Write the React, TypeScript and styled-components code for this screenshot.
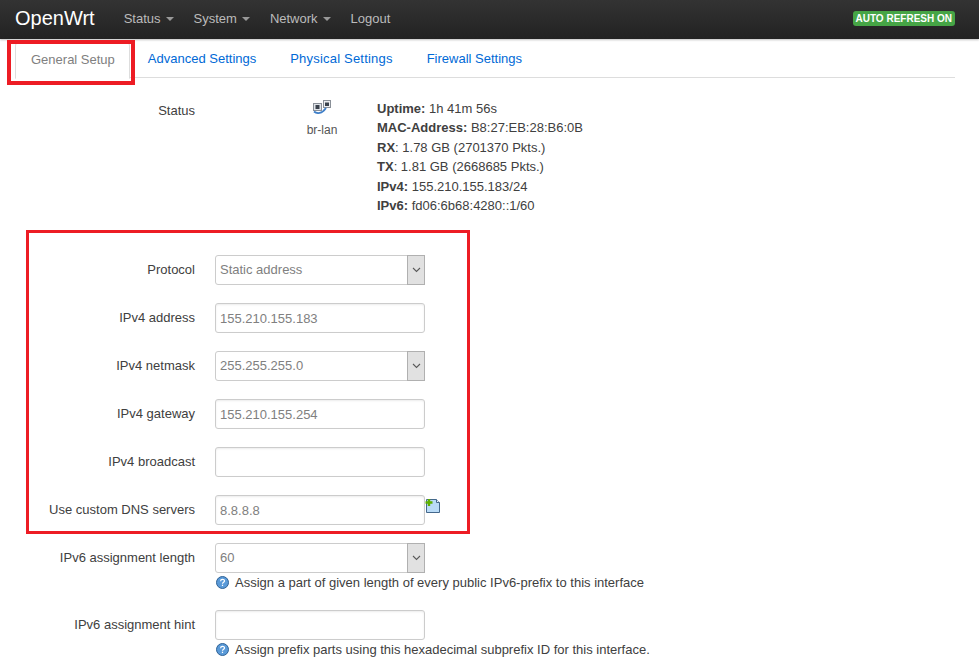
import React from 'react'
import styled, { createGlobalStyle } from 'styled-components'

const GlobalStyle = createGlobalStyle`
  html, body {
    margin: 0;
    padding: 0;
    height: 658px;
    overflow: hidden;
    background: #fff;
    font-family: "Liberation Sans", Arial, sans-serif;
    font-size: 13px;
    color: #555;
  }
`

const BridgeIcon = () => (
  <svg width="18" height="14" viewBox="0 0 18 14">
    <rect x="0.5" y="3.5" width="8" height="7" fill="#dfe3e8" stroke="#8a9098" />
    <rect x="10.5" y="0.5" width="7" height="7" fill="#eceef1" stroke="#8a9098" />
    <rect x="2.5" y="5" width="4" height="4" fill="#3a424c" />
    <rect x="12" y="2.5" width="4" height="3.5" fill="#3a424c" />
    <path d="M1 11.5c3 2.6 8 2.4 12-3.5" fill="none" stroke="#3f7fc8" strokeWidth="1.8" />
  </svg>
)

const AddIcon = () => (
  <svg width="16" height="15" viewBox="0 0 16 15">
    <path d="M1.5 1.5h10l3 3v10h-13z" fill="#b9dbf7" stroke="#44688c" />
    <path d="M11.5 1.5v3h3" fill="#eaf4fc" stroke="#44688c" />
    <path d="M4 1v7M0.5 4.5h7" stroke="#5fb000" strokeWidth="2.4" />
  </svg>
)

const HelpIcon = () => (
  <svg width="13" height="13" viewBox="0 0 13 13">
    <circle cx="6.5" cy="6.5" r="6" fill="#5a9ad8" stroke="#2f6296" />
    <path d="M4.6 5.2c0-2.3 3.9-2.3 3.9-.2 0 1.3-2 1.3-2 2.8" fill="none" stroke="#fff" strokeWidth="1.2" />
    <rect x="5.9" y="8.7" width="1.2" height="1.3" fill="#fff" />
  </svg>
)

const Chevron = () => (
  <svg width="9" height="6" viewBox="0 0 9 6">
    <path d="M1 1l3.5 3.5L8 1" fill="none" stroke="#5a5a5a" strokeWidth="1.1" />
  </svg>
)

const Field = ({ value }: { value?: string }) => <TextInput readOnly value={value ?? ''} />

const Dropdown = ({ value }: { value: string }) => (
  <SelectBox>
    <SelectValue>{value}</SelectValue>
    <SelectButton>
      <Chevron />
    </SelectButton>
  </SelectBox>
)

const App = () => (
  <Page>
    <GlobalStyle />
    <Navbar>
      <Brand>OpenWrt</Brand>
      <NavItem>Status<Caret /></NavItem>
      <NavItem>System<Caret /></NavItem>
      <NavItem>Network<Caret /></NavItem>
      <NavItem>Logout</NavItem>
      <Badge>AUTO REFRESH ON</Badge>
    </Navbar>

    <Tabs>
      <ActiveTab>General Setup</ActiveTab>
      <Tab>Advanced Settings</Tab>
      <Tab $tracking={0.2}>Physical Settings</Tab>
      <Tab>Firewall Settings</Tab>
    </Tabs>

    <Form>
      <StatusRow>
        <StatusLabel>Status</StatusLabel>
        <Device>
          <BridgeIcon />
          <DeviceName>br-lan</DeviceName>
        </Device>
        <Details>
          <div><b>Uptime:</b> 1h 41m 56s</div>
          <div><b>MAC-Address:</b> B8:27:EB:28:B6:0B</div>
          <div><b>RX</b>: 1.78 GB (2701370 Pkts.)</div>
          <div><b>TX</b>: 1.81 GB (2668685 Pkts.)</div>
          <div><b>IPv4:</b> 155.210.155.183/24</div>
          <div><b>IPv6:</b> fd06:6b68:4280::1/60</div>
        </Details>
      </StatusRow>

      <Row>
        <Label>Protocol</Label>
        <Dropdown value="Static address" />
      </Row>
      <Row>
        <Label>IPv4 address</Label>
        <Field value="155.210.155.183" />
      </Row>
      <Row>
        <Label>IPv4 netmask</Label>
        <Dropdown value="255.255.255.0" />
      </Row>
      <Row>
        <Label>IPv4 gateway</Label>
        <Field value="155.210.155.254" />
      </Row>
      <Row>
        <Label>IPv4 broadcast</Label>
        <Field />
      </Row>
      <Row>
        <Label>Use custom DNS servers</Label>
        <Field value="8.8.8.8" />
        <AddButton><AddIcon /></AddButton>
      </Row>
      <Row>
        <Label>IPv6 assignment length</Label>
        <Control>
          <Dropdown value="60" />
          <Help><HelpIcon />Assign a part of given length of every public IPv6-prefix to this interface</Help>
        </Control>
      </Row>
      <Row>
        <Label>IPv6 assignment hint</Label>
        <Control>
          <Field />
          <Help><HelpIcon />Assign prefix parts using this hexadecimal subprefix ID for this interface.</Help>
        </Control>
      </Row>
    </Form>

    <TabHighlight />
    <FormHighlight />
  </Page>
)

const Page = styled.div`
  position: relative;
  width: 979px;
  height: 658px;
  overflow: hidden;
`

const Navbar = styled.header`
  display: flex;
  align-items: center;
  box-sizing: border-box;
  height: 39px;
  padding: 0 24px 2px 15px;
  background: linear-gradient(#333333, #222222);
  box-shadow: 0 1px 2px rgba(0, 0, 0, 0.25);
`

const Brand = styled.div`
  margin-right: 29px;
  font-size: 20px;
  color: #fff;
`

const NavItem = styled.div`
  display: flex;
  align-items: center;
  margin-right: 20px;
  font-size: 13px;
  color: #bbbbbb;
`

const Caret = styled.span`
  width: 0;
  height: 0;
  margin-left: 5px;
  border-top: 4px solid #999;
  border-left: 4px solid transparent;
  border-right: 4px solid transparent;
`

const Badge = styled.div`
  margin-left: auto;
  padding: 2px 3px;
  border-radius: 3px;
  background: #46a546;
  font-size: 10px;
  font-weight: bold;
  line-height: 11px;
  color: #fff;
`

const Tabs = styled.nav`
  display: flex;
  height: 35px;
  margin: 3px 24px 0 15px;
  border-bottom: 1px solid #ddd;
`

const Tab = styled.div<{ $tracking?: number }>`
  height: 34px;
  padding: 0 17px;
  font-size: 13px;
  line-height: 34px;
  letter-spacing: ${props => props.$tracking ?? 0}px;
  color: #0069d6;
`

const ActiveTab = styled(Tab)`
  height: 35px;
  padding: 0 14px 0 15px;
  margin-right: 1px;
  border: 1px solid #ddd;
  border-bottom-color: #fff;
  border-radius: 4px 4px 0 0;
  background: #fff;
  color: #808080;
`

const Form = styled.main`
  display: flex;
  flex-direction: column;
  gap: 18px;
  padding-top: 22px;
`

const Row = styled.div`
  display: flex;
  align-items: flex-start;
`

const StatusRow = styled(Row)`
  height: 137px;
`

const Label = styled.label`
  flex: none;
  width: 195px;
  margin-right: 20px;
  font-size: 13px;
  line-height: 30px;
  text-align: right;
  color: #404040;
`

const StatusLabel = styled(Label)`
  line-height: 21px;
`

const Device = styled.div`
  display: flex;
  flex: none;
  flex-direction: column;
  align-items: center;
  width: 90px;
  margin-left: 62px;
`

const DeviceName = styled.div`
  margin-top: 9px;
  font-size: 12px;
  line-height: 14px;
  color: #555;
`

const Details = styled.div`
  margin: -1px 0 0 10px;
  font-size: 13px;
  line-height: 19.4px;
  color: #404040;
`

const Control = styled.div`
  display: flex;
  flex-direction: column;
`

const TextInput = styled.input`
  box-sizing: border-box;
  width: 210px;
  height: 30px;
  padding: 0 4px;
  border: 1px solid #ccc;
  border-radius: 3px;
  outline: none;
  box-shadow: inset 0 1px 2px rgba(0, 0, 0, 0.08);
  font-family: "Liberation Sans", Arial, sans-serif;
  font-size: 13px;
  color: #808080;
`

const SelectBox = styled.div`
  display: flex;
  box-sizing: border-box;
  width: 210px;
  height: 30px;
  border: 1px solid #ccc;
  border-radius: 3px;
  background: #fff;
`

const SelectValue = styled.div`
  flex: 1;
  padding-left: 4px;
  font-size: 13px;
  line-height: 28px;
  color: #808080;
`

const SelectButton = styled.div`
  display: flex;
  align-items: center;
  justify-content: center;
  width: 16px;
  margin: -1px -1px -1px 0;
  border: 1px solid #b0b0b0;
  background: #e1e1e1;
`

const AddButton = styled.div`
  display: flex;
  margin-top: 3px;
`

const Help = styled.div`
  display: flex;
  align-items: center;
  gap: 6px;
  width: 600px;
  height: 19px;
  padding-left: 1px;
  font-size: 13px;
  color: #404040;
`

const TabHighlight = styled.div`
  position: absolute;
  left: 7px;
  top: 40px;
  width: 120px;
  height: 37px;
  border: 4px solid #ed1c24;
`

const FormHighlight = styled.div`
  position: absolute;
  left: 26px;
  top: 230px;
  width: 438px;
  height: 298px;
  border: 3px solid #ed1c24;
`

export default App
